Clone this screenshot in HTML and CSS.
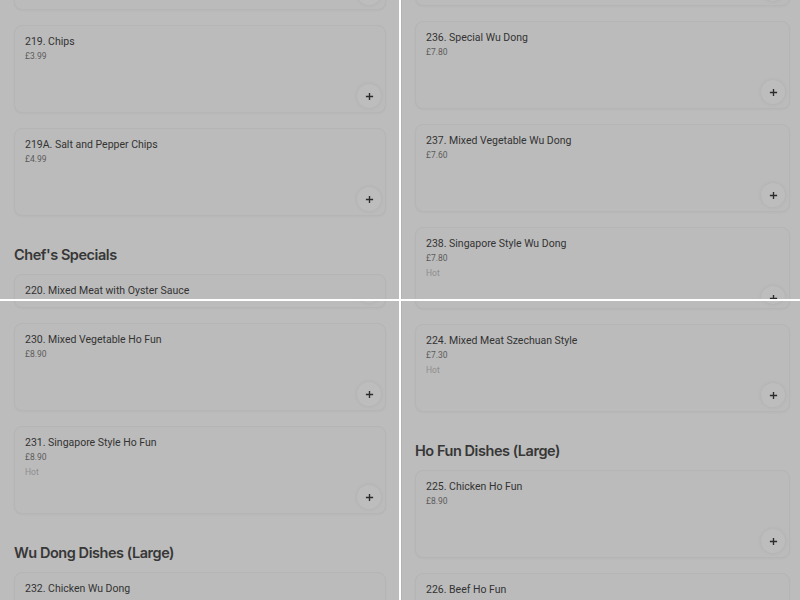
FILE: index.html
```html
<!DOCTYPE html>
<html lang="en">
<head>
    <meta charset="UTF-8">
    <meta name="viewport" content="width=device-width, initial-scale=1.0">
    <title>Menu</title>
    <link rel="stylesheet" href="styles.css">
</head>
<body>
<div class="tiles">
    <!-- top left -->
    <div class="pane pane-left">
        <div class="menu scroll-a">
            <div class="card card-cut" aria-hidden="true"><span class="add"><svg viewBox="0 0 10 10"><path d="M5 1v8M1 5h8"/></svg></span></div>
            <div class="card">
                <div class="name">219. Chips</div>
                <div class="price">£3.99</div>
                <span class="add"><svg viewBox="0 0 10 10"><path d="M5 1v8M1 5h8"/></svg></span>
            </div>
            <div class="card">
                <div class="name">219A. Salt and Pepper Chips</div>
                <div class="price">£4.99</div>
                <span class="add"><svg viewBox="0 0 10 10"><path d="M5 1v8M1 5h8"/></svg></span>
            </div>
            <h2 class="section">Chef's Specials</h2>
            <div class="card">
                <div class="name">220. Mixed Meat with Oyster Sauce</div>
            </div>
        </div>
    </div>
    <!-- top right -->
    <div class="pane pane-right">
        <div class="menu scroll-b">
            <div class="card card-cut" aria-hidden="true"><span class="add"><svg viewBox="0 0 10 10"><path d="M5 1v8M1 5h8"/></svg></span></div>
            <div class="card">
                <div class="name">236. Special Wu Dong</div>
                <div class="price">£7.80</div>
                <span class="add"><svg viewBox="0 0 10 10"><path d="M5 1v8M1 5h8"/></svg></span>
            </div>
            <div class="card">
                <div class="name">237. Mixed Vegetable Wu Dong</div>
                <div class="price">£7.60</div>
                <span class="add"><svg viewBox="0 0 10 10"><path d="M5 1v8M1 5h8"/></svg></span>
            </div>
            <div class="card">
                <div class="name">238. Singapore Style Wu Dong</div>
                <div class="price">£7.80</div>
                <div class="note">Hot</div>
                <span class="add"><svg viewBox="0 0 10 10"><path d="M5 1v8M1 5h8"/></svg></span>
            </div>
        </div>
    </div>
    <!-- bottom left -->
    <div class="pane pane-left">
        <div class="menu scroll-c">
            <div class="card card-cut" aria-hidden="true"><span class="add"><svg viewBox="0 0 10 10"><path d="M5 1v8M1 5h8"/></svg></span></div>
            <div class="card">
                <div class="name">230. Mixed Vegetable Ho Fun</div>
                <div class="price">£8.90</div>
                <span class="add"><svg viewBox="0 0 10 10"><path d="M5 1v8M1 5h8"/></svg></span>
            </div>
            <div class="card">
                <div class="name">231. Singapore Style Ho Fun</div>
                <div class="price">£8.90</div>
                <div class="note">Hot</div>
                <span class="add"><svg viewBox="0 0 10 10"><path d="M5 1v8M1 5h8"/></svg></span>
            </div>
            <h2 class="section">Wu Dong Dishes (Large)</h2>
            <div class="card">
                <div class="name">232. Chicken Wu Dong</div>
            </div>
        </div>
    </div>
    <!-- bottom right -->
    <div class="pane pane-right">
        <div class="menu scroll-d">
            <div class="card card-cut" aria-hidden="true"><span class="add"><svg viewBox="0 0 10 10"><path d="M5 1v8M1 5h8"/></svg></span></div>
            <div class="card">
                <div class="name">224. Mixed Meat Szechuan Style</div>
                <div class="price">£7.30</div>
                <div class="note">Hot</div>
                <span class="add"><svg viewBox="0 0 10 10"><path d="M5 1v8M1 5h8"/></svg></span>
            </div>
            <h2 class="section">Ho Fun Dishes (Large)</h2>
            <div class="card">
                <div class="name">225. Chicken Ho Fun</div>
                <div class="price">£8.90</div>
                <span class="add"><svg viewBox="0 0 10 10"><path d="M5 1v8M1 5h8"/></svg></span>
            </div>
            <div class="card">
                <div class="name">226. Beef Ho Fun</div>
            </div>
        </div>
    </div>
</div>
</body>
</html>
```

FILE: styles.css
```css
body {
    margin: 0;
    background: #ffffff; /* the white lines between the four views */
    font-family: Roboto, "Liberation Sans", sans-serif;
    color: #3b3b3b;
}
.tiles {
    display: grid;
    grid-template-columns: 399px 399px;
    grid-template-rows: 299px 299px;
    gap: 2px;
    width: 800px;
    height: 600px;
}
.pane {
    overflow: hidden;
    background: #bcbcbc;
}
.pane-right {
    border-left: 1px solid #b3b3b3;
}
.menu {
    display: flex;
    flex-direction: column;
    gap: 15px;
    padding: 0 13px 0 14px;
}
.pane-right .menu {
    padding: 0 10px 0 13px;
}
/* scroll positions of each view */
.scroll-a { margin-top: -78px; }
.scroll-b { margin-top: -82px; }
.scroll-c { margin-top: -81px; }
.scroll-d { margin-top: -80px; }
.card {
    position: relative;
    box-sizing: border-box;
    height: 88px;
    flex: none;
    padding: 9px 10px 0 10px;
    background: #bbbbbb;
    border: 1px solid #b5b5b5;
    border-radius: 8px;
    box-shadow: 0 1px 2px rgba(0, 0, 0, 0.03);
}
.name {
    font-size: 10.5px;
    font-weight: 400;
    line-height: 14px;
    color: #333333;
}
.price {
    font-size: 8.5px;
    line-height: 15px;
    color: #5c5c5c;
}
.note {
    font-size: 8.5px;
    line-height: 14px;
    color: #8e8e8e;
}
.add {
    position: absolute;
    right: 4px;
    bottom: 4px;
    width: 24px;
    height: 24px;
    border-radius: 50%;
    background: #bdbdbd;
    box-shadow: 0 0 4px rgba(0, 0, 0, 0.07);
    display: flex;
    align-items: center;
    justify-content: center;
}
.add svg {
    width: 9px;
    height: 9px;
    stroke: #2b2b2b;
    stroke-width: 1.5;
    fill: none;
}
.section {
    margin: 14px 0 -6px 0;
    font-family: Inter, "Liberation Sans", sans-serif;
    font-size: 14.5px;
    font-weight: 600;
    line-height: 20px;
    letter-spacing: -0.45px;
    color: #373737;
}
```
